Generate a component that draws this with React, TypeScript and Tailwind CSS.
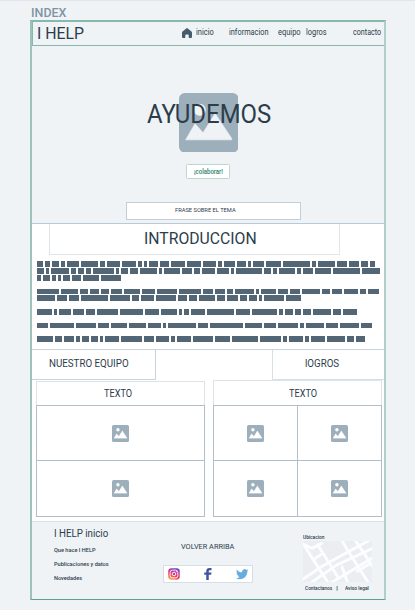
import { useLayoutEffect, useRef, useState } from "react";
import type { ReactNode } from "react";

/* A single line of text condensed or widened to fill its box. */
function Fit({ className, children }: { className: string; children: ReactNode }) {
  const box = useRef<HTMLDivElement>(null);
  const text = useRef<HTMLSpanElement>(null);
  const [scale, setScale] = useState(1);
  useLayoutEffect(() => {
    if (box.current && text.current) {
      setScale(box.current.getBoundingClientRect().width / text.current.offsetWidth);
    }
  }, []);
  return (
    <div ref={box} className={`flex shrink-0 items-center whitespace-nowrap ${className}`}>
      <span ref={text} className="inline-block origin-left" style={{ transform: `scaleX(${scale})` }}>
        {children}
      </span>
    </div>
  );
}

function Picture({ className, back }: { className: string; back: string }) {
  return (
    <svg viewBox="0 0 178 178" className={className}>
      <rect width="178" height="178" rx="17" fill="#9eafbc" />
      <circle cx="62" cy="50" r="18" fill={back} />
      <path d="M20 140 L48 92 L72 119 L108 61 L158 137 Q159 140 156 140 Z" fill={back} stroke={back} strokeWidth="2" strokeLinejoin="round" />
    </svg>
  );
}

type Line = { width: number; words: number[] };

const paragraphs: Line[][] = [
  [
    { width: 1013, words: [18, 15, 22, 12, 36, 53, 15, 39, 43, 12, 11, 26, 28, 42, 43, 40, 11, 35, 27, 9, 33, 48, 81, 11, 54, 30, 30, 23, 13] },
    { width: 1028, words: [21, 10, 55, 15, 20, 14, 64, 10, 22, 24, 51, 10, 48, 30, 21, 39, 36, 11, 77, 22, 12, 49, 12, 31, 50, 84, 53] },
    { width: 252, words: [11, 23, 11, 9, 22, 29, 49, 60] },
  ],
  [
    { width: 1025, words: [66, 55, 23, 28, 23, 36, 47, 41, 60, 67, 33, 31, 18, 57, 11, 45, 30, 30, 55, 24, 33, 43, 18, 32] },
    { width: 792, words: [56, 29, 33, 80, 63, 20, 41, 62, 27, 24, 51, 22, 35, 22, 24, 10, 61, 46] },
  ],
  [{ width: 960, words: [46, 10, 36, 35, 27, 64, 70, 45, 48, 11, 14, 45, 82, 42, 77, 13, 25, 18, 24, 55, 27, 42] }],
  [{ width: 1005, words: [33, 74, 61, 33, 51, 51, 38, 10, 86, 32, 98, 53, 38, 59, 14, 55, 36, 59, 33] }],
  [{ width: 984, words: [51, 19, 33, 11, 23, 20, 11, 43, 66, 31, 40, 12, 42, 63, 48, 81, 64, 13, 44, 12, 42, 55, 24, 27] }],
];

function Intro() {
  return (
    <div className="flex h-[88px] flex-col gap-[8px] pt-[0.3px] pl-[5px]">
      {paragraphs.map((lines, p) => (
        <div key={p} className="flex flex-col gap-[1.2px]">
          {lines.map((line, l) => (
            <div key={l} className="flex h-[5.65px] gap-[2px]" style={{ width: line.width / 3 }}>
              {line.words.map((w, i) => (
                <span key={i} className="min-w-0 basis-0 bg-[#526675]" style={{ flexGrow: w }} />
              ))}
            </div>
          ))}
        </div>
      ))}
    </div>
  );
}

function Cell({ className }: { className: string }) {
  return (
    <div className={`flex items-center justify-center border-[#b0bfcb] ${className}`}>
      <Picture className="size-[17px]" back="#ffffff" />
    </div>
  );
}

export default function App() {
  return (
    <div className="h-[610px] w-[415px] overflow-hidden border-t border-[#e2e6ea] bg-[#eff3f6] pl-[30px] font-['Roboto',sans-serif] text-[#2c3d4b]">
      <Fit className="ml-px h-[19px] w-[35.5px] pt-[5px] text-[13px] font-medium text-[#8293a5]">INDEX</Fit>

      <div className="flex h-[580px] w-[356px] flex-col border-t-2 border-r-2 border-b border-l-2 border-t-[#86b8ae] border-r-[#b0cfcb] border-b-[#5f9f95] border-l-[#9bc2bd]">
        <header className="flex h-[24px] shrink-0 items-center border-b border-l border-[#86b8ae] pl-[4px]">
          <Fit className="h-[24px] w-[47.5px] pt-px text-[17px]">I HELP</Fit>
          <svg viewBox="0 0 20 20" className="mb-[2px] ml-[97.5px] h-[10px] w-[10px] shrink-0" fill="#465b6b">
            <path d="M8.500 0.800 Q10 -0.500 11.500 0.800 L19 7 Q20 8 20 9.500 V18 Q20 20 18 20 H13.500 V15 Q13.500 13 11.500 13 H8.500 Q6.500 13 6.500 15 V20 H2 Q0 20 0 18 V9.500 Q0 8 1 7 Z" />
          </svg>
          <nav className="mb-[2px] flex text-[8.300px]">
            <Fit className="ml-[4px] w-[18px]">inicio</Fit>
            <Fit className="ml-[15px] w-[40px]">informacion</Fit>
            <Fit className="ml-[9px] w-[22.5px]">equipo</Fit>
            <Fit className="ml-[5.500px] w-[20.5px]">logros</Fit>
            <Fit className="ml-[26.5px] w-[28.5px]">contacto</Fit>
          </nav>
        </header>

        <section className="flex h-[178px] shrink-0 flex-col items-center border-b border-[#b8cad6]">
          <div className="mt-[46.5px] ml-[1px] grid h-[59.5px] place-items-center">
            <Picture className="col-start-1 row-start-1 size-[59.5px]" back="#eff3f6" />
            <Fit className="z-10 col-start-1 row-start-1 mb-[15px] h-[30px] w-[124px] text-[25.3px]">AYUDEMOS</Fit>
          </div>
          <div className="mt-[12px] flex h-[15px] w-[44px] items-center justify-center rounded-[1.5px] border border-[#b9d8d0] bg-white">
            <Fit className="w-[28.5px] pt-px text-[7px] font-medium text-[#2c826b]">¡colaborar!</Fit>
          </div>
          <div className="mt-[23px] ml-[94px] flex h-[18px] w-[175px] items-center self-start border border-[#c2cfda] bg-white pb-[3px] pl-[48px]">
            <Fit className="w-[61px] text-[6px]">FRASE SOBRE EL TEMA</Fit>
          </div>
        </section>

        <main className="h-[297px] shrink-0 bg-white">
          <div className="ml-[17px] flex h-[31px] w-[291px] border-r border-b border-l border-[#dfe6ec] pl-[94px]">
            <Fit className="h-[30px] w-[113px] text-[17.300px]">INTRODUCCION</Fit>
          </div>
          <div className="pt-[6px]">
            <Intro />
          </div>
          <div className="flex h-[31px] justify-between border-t border-[#c8d3de]">
            <div className="flex h-[30px] w-[124px] border-r border-b border-[#c8d3de] pl-[17px]">
              <Fit className="h-[28px] w-[79.5px] text-[10.300px]">NUESTRO EQUIPO</Fit>
            </div>
            <div className="flex h-[30px] w-[112px] border-b border-l border-[#d7e0e7] pl-[32px]">
              <Fit className="h-[28px] w-[34px] text-[10.300px]">lOGROS</Fit>
            </div>
          </div>
          <div className="flex gap-[8px] pl-[4px]">
            <div className="mt-[1px] w-[169px]">
              <div className="flex h-[24px] justify-center border-x border-t border-[#dce3e9] pr-[4px]">
                <Fit className="h-[24px] w-[28.5px] text-[10.300px]">TEXTO</Fit>
              </div>
              <Cell className="h-[56px] border" />
              <Cell className="h-[56px] border-x border-b" />
            </div>
            <div className="w-[169px]">
              <div className="flex h-[25px] justify-center border-x border-t border-[#dce3e9] pl-[11px]">
                <Fit className="h-[26px] w-[28.5px] text-[10.300px]">TEXTO</Fit>
              </div>
              <div className="grid grid-cols-2">
                <Cell className="h-[56px] border" />
                <Cell className="h-[56px] border-y border-r" />
                <Cell className="h-[56px] border-x border-b" />
                <Cell className="h-[56px] border-r border-b" />
              </div>
            </div>
          </div>
        </main>

        <footer className="flex min-h-0 flex-1 border-t border-[#d8e1e8] pl-[22px]">
          <div className="w-[110px] pt-[5px] text-[6px] font-medium">
            <Fit className="h-[14px] w-[54.5px] text-[10.500px] font-normal">I HELP inicio</Fit>
            <Fit className="mt-[1.500px] h-[14px] w-[42px]">Que hace I HELP</Fit>
            <Fit className="h-[14px] w-[55px]">Publicaciones y datos</Fit>
            <Fit className="h-[14px] w-[28px]">Novedades</Fit>
          </div>
          <div className="w-[90px] pt-[19px]">
            <Fit className="ml-[17px] h-[12px] w-[53.5px] text-[7.800px]">VOLVER ARRIBA</Fit>
            <div className="mt-[12px] -ml-px flex h-[18px] w-[90px] items-center justify-between border border-[#d5dfe7] bg-white px-[4px]">
              <svg viewBox="0 0 24 24" className="size-[12px]">
                <defs>
                  <linearGradient id="ig" x1="0.2" y1="1" x2="0.6" y2="0">
                    <stop offset="0" stopColor="#fbb54b" />
                    <stop offset="0.4" stopColor="#ee3e60" />
                    <stop offset="0.75" stopColor="#b637a8" />
                    <stop offset="1" stopColor="#6048cf" />
                  </linearGradient>
                </defs>
                <rect x="0.5" y="0.5" width="23" height="23" rx="6" fill="url(#ig)" />
                <g fill="none" stroke="#ffffff" strokeWidth="1.800">
                  <rect x="4.300" y="4.300" width="15.400" height="15.400" rx="4.500" />
                  <circle cx="12" cy="12" r="3.600" />
                </g>
                <circle cx="16.600" cy="7.400" r="1.100" fill="#ffffff" />
              </svg>
              <svg viewBox="0 0 16 24" className="h-[12px] w-[8px]" fill="#3d56a0">
                <path d="M4.500 24 V13.500 H0.500 V9 H4.500 V6 C4.500 2 7 0 10.500 0 H15 V4.300 H12 C10 4.300 9.500 5.200 9.500 6.500 V9 H15 L14.300 13.500 H9.500 V24 Z" />
              </svg>
              <svg viewBox="0 0 24 24" className="size-[12.500px]" fill="#67abdf">
                <path d="M23.953 4.570a10 10 0 01-2.825.775 4.958 4.958 0 002.163-2.723 9.990 9.990 0 01-3.127 1.184 4.920 4.920 0 00-8.384 4.482C7.690 8.095 4.067 6.130 1.640 3.162a4.822 4.822 0 00-.666 2.475c0 1.710.87 3.213 2.188 4.096a4.904 4.904 0 01-2.228-.616v.06a4.923 4.923 0 003.946 4.827 4.996 4.996 0 01-2.212.085 4.936 4.936 0 004.604 3.417 9.867 9.867 0 01-6.102 2.105c-.39 0-.779-.023-1.170-.067a13.995 13.995 0 007.557 2.209c9.053 0 13.998-7.496 13.998-13.985 0-.21 0-.42-.015-.63A9.935 9.935 0 0024 4.590z" />
              </svg>
            </div>
          </div>
          <div className="ml-[49px] w-[69px] pt-[11px] text-[5.500px] font-medium">
            <Fit className="h-[8px] w-[21px]">Ubicacion</Fit>
            <svg viewBox="0 0 207 123" className="h-[41px] w-[69px]">
              <rect width="207" height="123" fill="#eaeef3" />
              <g stroke="#fcfdfe" strokeWidth="8.500" fill="none">
                <path d="M-5 118 L60 74 L213 -10" />
                <path d="M20 128 L100 73 L213 20" />
                <path d="M80 128 L140 92 L213 48" />
                <path d="M0 10 L27 22 L60 5" />
                <path d="M-2 5 L45 78 L77 128" />
                <path d="M42 8 L107 112" />
                <path d="M28 58 L58 38" />
                <path d="M115 -5 L132 25 L198 128" />
                <path d="M155 -5 L213 82" />
                <path d="M135 128 L116 75" />
                <path d="M160 92 L205 65" />
              </g>
            </svg>
            <div className="flex pt-[2px] pl-[2px]">
              <Fit className="h-[8px] w-[27px]">Contactanos</Fit>
              <Fit className="ml-[4px] h-[8px] w-[1.500px]">|</Fit>
              <Fit className="ml-[7.500px] h-[8px] w-[24px]">Aviso legal</Fit>
            </div>
          </div>
        </footer>
      </div>
    </div>
  );
}
